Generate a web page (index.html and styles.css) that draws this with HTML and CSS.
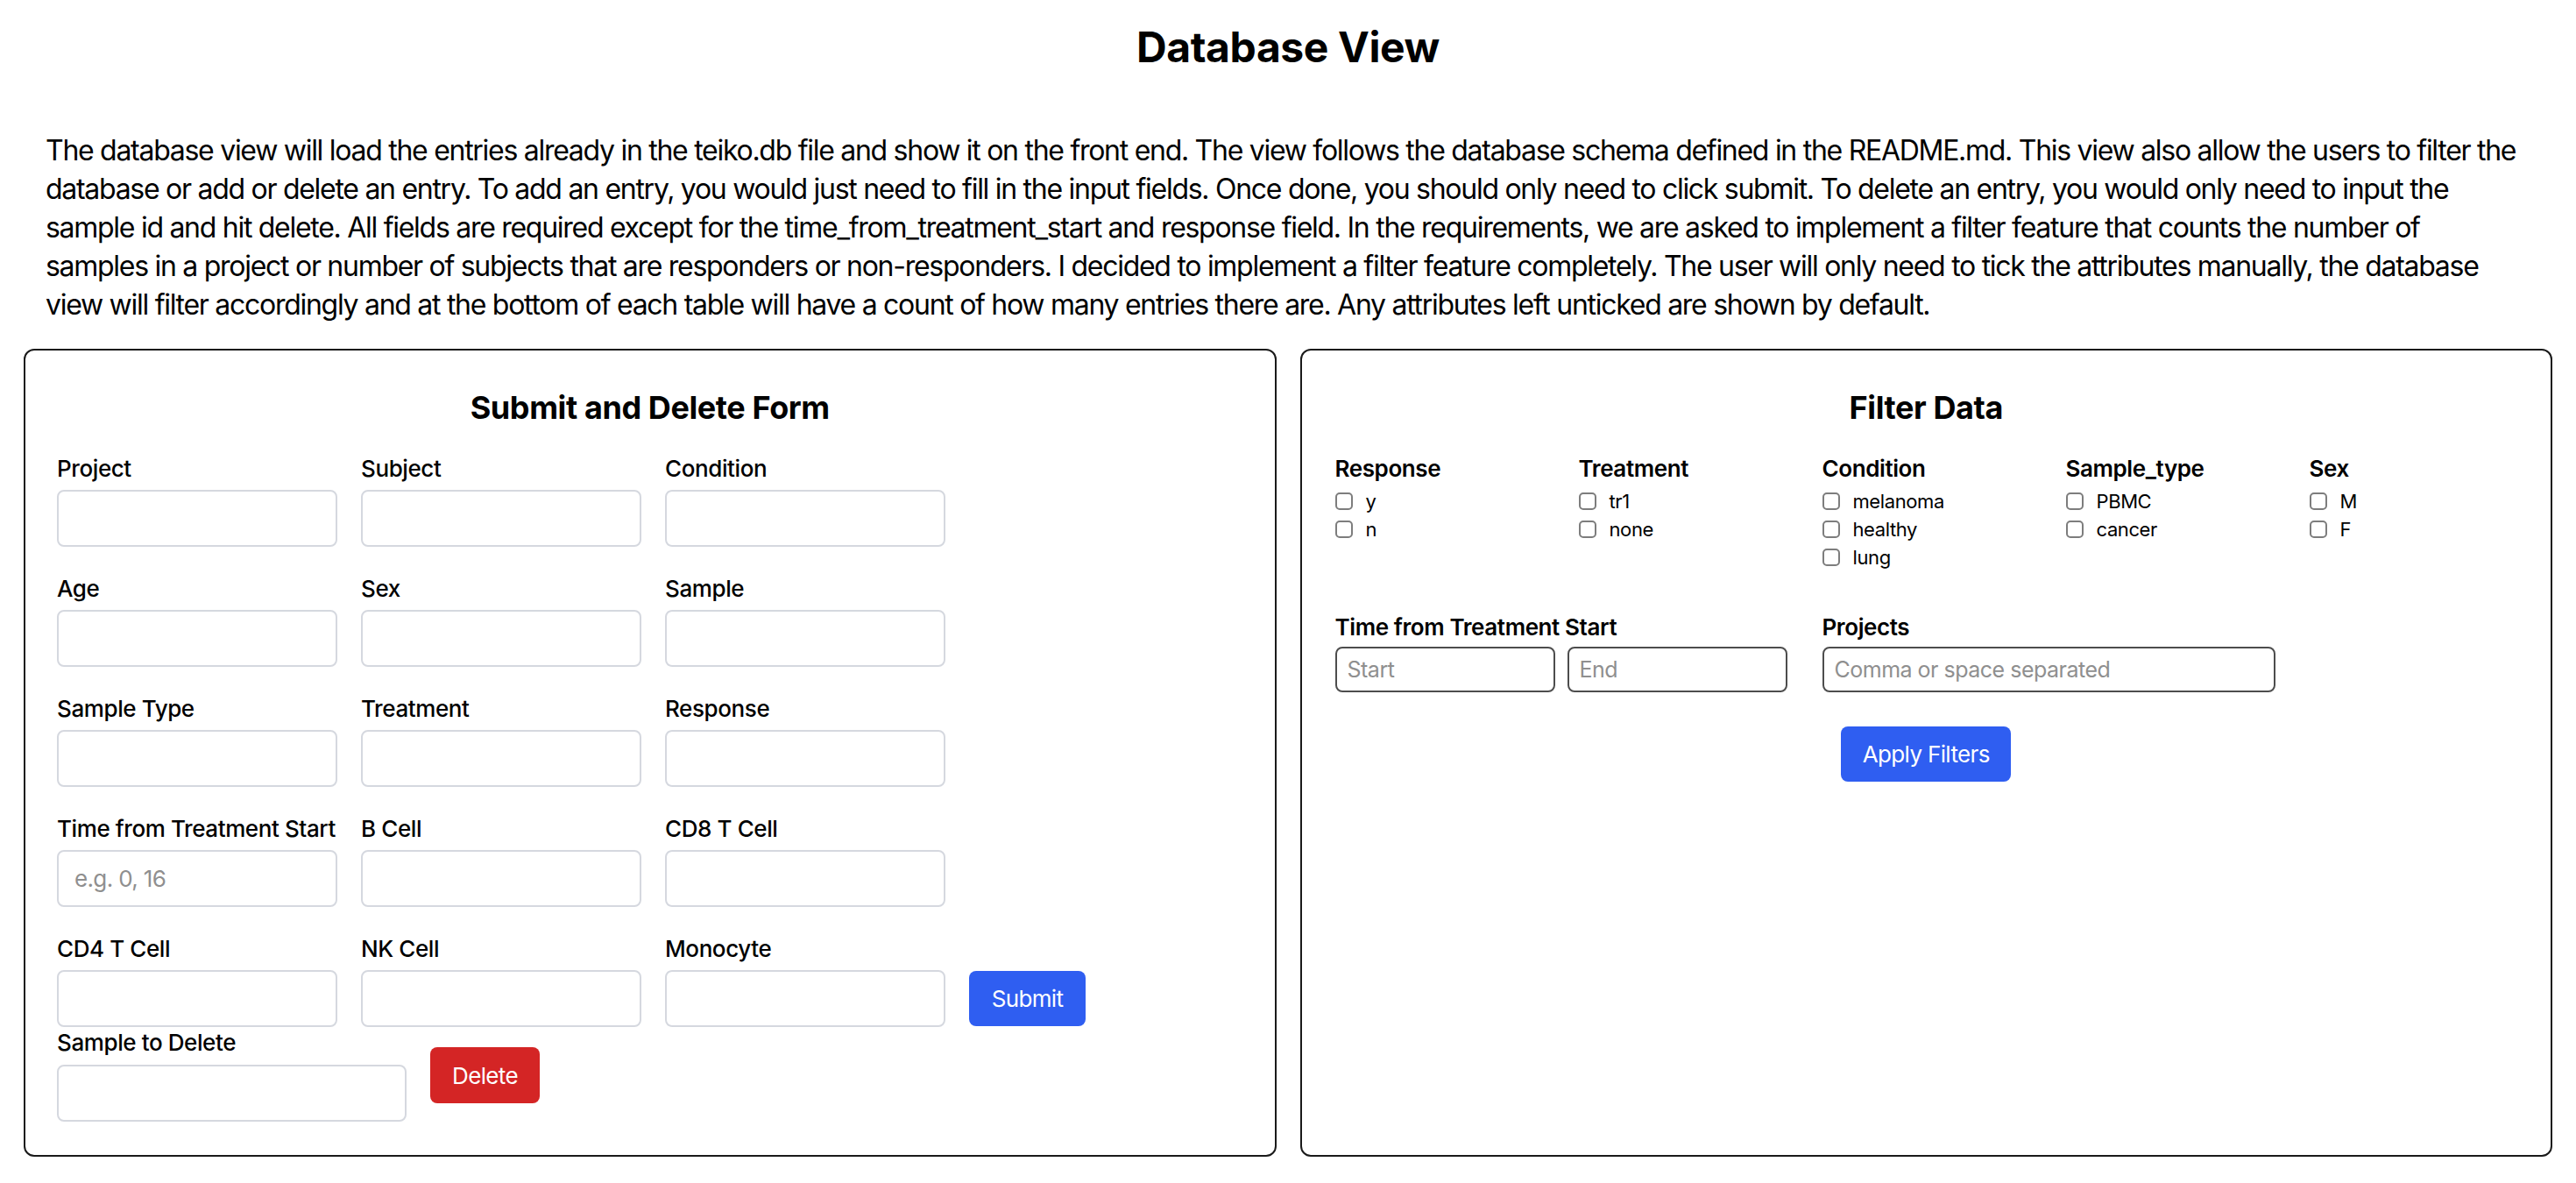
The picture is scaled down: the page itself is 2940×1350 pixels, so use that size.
FILE: index.html
```html
<!DOCTYPE html>
<html lang="en">
<head>
<meta charset="utf-8">
<title>Database View</title>
<link rel="stylesheet" href="styles.css">
</head>
<body>
<div class="page">
  <h1 class="title">Database View</h1>
  <p class="intro">The database view will load the entries already in the teiko.db file and show it on the front end. The view follows the database schema defined in the README.md. This view also allow the users to filter the<br>database or add or delete an entry. To add an entry, you would just need to fill in the input fields. Once done, you should only need to click submit. To delete an entry, you would only need to input the<br>sample id and hit delete. All fields are required except for the time_from_treatment_start and response field. In the requirements, we are asked to implement a filter feature that counts the number of<br>samples in a project or number of subjects that are responders or non-responders. I decided to implement a filter feature completely. The user will only need to tick the attributes manually, the database<br>view will filter accordingly and at the bottom of each table will have a count of how many entries there are. Any attributes left unticked are shown by default.</p>

  <div class="panels">
    <section class="panel">
      <h2 class="panel-title">Submit and Delete Form</h2>
      <div class="form-grid">
        <div class="field"><label class="field-label">Project</label><input class="field-input" type="text"></div>
        <div class="field"><label class="field-label">Subject</label><input class="field-input" type="text"></div>
        <div class="field"><label class="field-label">Condition</label><input class="field-input" type="text"></div>
        <div class="spacer"></div>

        <div class="field"><label class="field-label">Age</label><input class="field-input" type="text"></div>
        <div class="field"><label class="field-label">Sex</label><input class="field-input" type="text"></div>
        <div class="field"><label class="field-label">Sample</label><input class="field-input" type="text"></div>
        <div class="spacer"></div>

        <div class="field"><label class="field-label">Sample Type</label><input class="field-input" type="text"></div>
        <div class="field"><label class="field-label">Treatment</label><input class="field-input" type="text"></div>
        <div class="field"><label class="field-label">Response</label><input class="field-input" type="text"></div>
        <div class="spacer"></div>

        <div class="field"><label class="field-label">Time from Treatment Start</label><input class="field-input" type="text" placeholder="e.g. 0, 16"></div>
        <div class="field"><label class="field-label">B Cell</label><input class="field-input" type="text"></div>
        <div class="field"><label class="field-label">CD8 T Cell</label><input class="field-input" type="text"></div>
        <div class="spacer"></div>

        <div class="field"><label class="field-label">CD4 T Cell</label><input class="field-input" type="text"></div>
        <div class="field"><label class="field-label">NK Cell</label><input class="field-input" type="text"></div>
        <div class="field"><label class="field-label">Monocyte</label><input class="field-input" type="text"></div>
        <button class="btn btn-blue btn-submit" type="button">Submit</button>
      </div>

      <div class="delete-row">
        <div class="field">
          <label class="field-label">Sample to Delete</label>
          <input class="field-input delete-input" type="text">
        </div>
        <button class="btn btn-red btn-delete" type="button">Delete</button>
      </div>
    </section>

    <section class="panel">
      <h2 class="panel-title">Filter Data</h2>
      <div class="filter-grid">
        <div class="filter-group">
          <div class="group-title">Response</div>
          <label class="check"><input type="checkbox"><span>y</span></label>
          <label class="check"><input type="checkbox"><span>n</span></label>
        </div>
        <div class="filter-group">
          <div class="group-title">Treatment</div>
          <label class="check"><input type="checkbox"><span>tr1</span></label>
          <label class="check"><input type="checkbox"><span>none</span></label>
        </div>
        <div class="filter-group">
          <div class="group-title">Condition</div>
          <label class="check"><input type="checkbox"><span>melanoma</span></label>
          <label class="check"><input type="checkbox"><span>healthy</span></label>
          <label class="check"><input type="checkbox"><span>lung</span></label>
        </div>
        <div class="filter-group">
          <div class="group-title">Sample_type</div>
          <label class="check"><input type="checkbox"><span>PBMC</span></label>
          <label class="check"><input type="checkbox"><span>cancer</span></label>
        </div>
        <div class="filter-group">
          <div class="group-title">Sex</div>
          <label class="check"><input type="checkbox"><span>M</span></label>
          <label class="check"><input type="checkbox"><span>F</span></label>
        </div>
      </div>

      <div class="range-row">
        <div class="range-group">
          <div class="group-title">Time from Treatment Start</div>
          <div class="range-inputs">
            <input class="filter-input small" type="text" placeholder="Start">
            <input class="filter-input small" type="text" placeholder="End">
          </div>
        </div>
        <div class="range-group">
          <div class="group-title">Projects</div>
          <input class="filter-input wide" type="text" placeholder="Comma or space separated">
        </div>
      </div>

      <div class="apply-row">
        <button class="btn btn-blue btn-apply" type="button">Apply Filters</button>
      </div>
    </section>
  </div>
</div>
</body>
</html>
```

FILE: styles.css
```css
* { box-sizing: border-box; }

html, body {
  margin: 0;
  padding: 0;
  background: #ffffff;
  overflow: hidden;
}

body {
  font-family: "Inter", "Noto Sans", sans-serif;
  color: #000;
  letter-spacing: -0.025em;
}

.page {
  padding: 25px 27px 0;
}

.title {
  margin: 0 0 67px;
  font-size: 48px;
  line-height: 58px;
  font-weight: 700;
  text-align: center;
}

.intro {
  margin: 0 0 28px;
  padding: 0 10px 0 25px;
  font-size: 32px;
  line-height: 44px;
  letter-spacing: -0.04em;
  white-space: nowrap;
}

.panels {
  display: grid;
  grid-template-columns: minmax(0, 1fr) minmax(0, 1fr);
  column-gap: 27px;
}

.panel {
  border: 2px solid #1a1a1a;
  border-radius: 12px;
  padding: 36px 36px 38px;
  min-width: 0;
}

.panel-title {
  margin: 7px 0 32px;
  font-size: 36px;
  line-height: 44px;
  font-weight: 700;
  text-align: center;
}

.form-grid {
  display: grid;
  grid-template-columns: 320px 320px 320px auto;
  column-gap: 27px;
  row-gap: 32px;
  justify-content: start;
}

.field {
  display: flex;
  flex-direction: column;
}

.field-label {
  font-size: 26px;
  line-height: 32px;
  font-weight: 500;
  margin-bottom: 8px;
  white-space: nowrap;
}

.field-input {
  width: 320px;
  height: 65px;
  border: 2px solid #d5d8df;
  border-radius: 8px;
  padding: 0 18px;
  font-family: inherit;
  font-size: 26px;
  letter-spacing: -0.025em;
  color: #000;
  background: #fff;
  outline: none;
}

.field-input::placeholder,
.filter-input::placeholder {
  color: #8f8f8f;
}

.btn {
  border: none;
  border-radius: 8px;
  color: #fff;
  font-family: inherit;
  font-size: 26px;
  font-weight: 400;
  letter-spacing: -0.025em;
  cursor: pointer;
  padding: 0;
}

.btn-blue { background: #2f5ef1; }
.btn-red { background: #d42525; }

.btn-submit {
  align-self: end;
  width: 133px;
  height: 63px;
  margin-bottom: 1px;
}

.delete-row {
  display: flex;
  align-items: center;
  gap: 27px;
  margin-top: 2px;
}

.delete-row .field-label {
  margin-bottom: 9px;
}

.delete-input {
  width: 399px;
}

.btn-delete {
  width: 125px;
  height: 64px;
}

.filter-grid {
  display: grid;
  grid-template-columns: repeat(4, 250px) minmax(0, 1fr);
  column-gap: 28px;
  padding-left: 2px;
}

.group-title {
  font-size: 26px;
  line-height: 32px;
  font-weight: 600;
  white-space: nowrap;
}

.filter-group .group-title {
  margin-bottom: 5px;
}

.check {
  display: flex;
  align-items: center;
  height: 32px;
  font-size: 22px;
}

.check input {
  appearance: none;
  -webkit-appearance: none;
  width: 20px;
  height: 20px;
  margin: 0 15px 0 0;
  border: 2px solid #7d7d7d;
  border-radius: 5px;
  background: #fff;
  flex: none;
}

.range-row {
  display: flex;
  gap: 40px;
  margin-top: 48px;
  padding-left: 2px;
}

.range-group .group-title {
  margin-bottom: 6px;
}

.range-inputs {
  display: flex;
  gap: 14px;
}

.filter-input {
  height: 52px;
  border: 2px solid #4d4d4d;
  border-radius: 8px;
  padding: 0 12px;
  font-family: inherit;
  font-size: 25px;
  letter-spacing: -0.02em;
  background: #fff;
  outline: none;
}

.filter-input.small { width: 251px; }
.filter-input.wide { width: 517px; }

.apply-row {
  display: flex;
  justify-content: center;
  margin-top: 39px;
}

.btn-apply {
  width: 194px;
  height: 63px;
}
```
